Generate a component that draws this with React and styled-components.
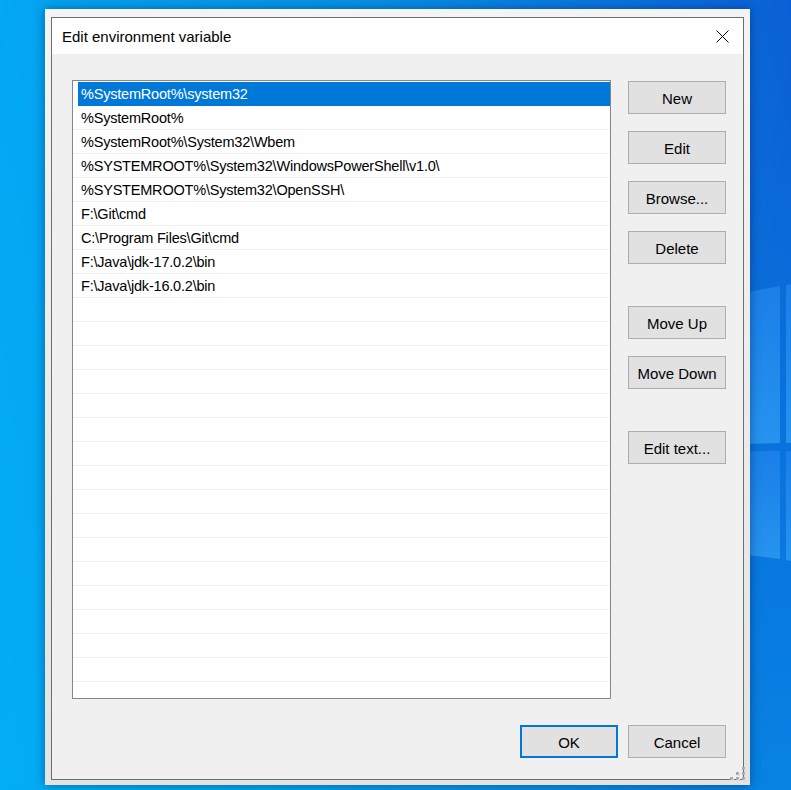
import React from "react";
import styled, { createGlobalStyle } from "styled-components";

const Global = createGlobalStyle`
  html, body { margin: 0; padding: 0; width: 791px; height: 790px; overflow: hidden; }
  body { font-family: "Liberation Sans", Arial, sans-serif; }
  * { box-sizing: border-box; }
`;

const Desktop = styled.div`
  position: relative;
  width: 791px;
  height: 790px;
  overflow: hidden;
  padding: 9px 0 0 45px;
  background: #0a8fe6;
`;

const WallpaperArt = styled.svg`
  position: absolute;
  left: 0;
  top: 0;
  z-index: 0;
`;

const Frame = styled.div`
  position: relative;
  z-index: 1;
  width: 705px;
  height: 776px;
  padding: 8px 6px 5px 6px;
  background: linear-gradient(#f4f4f4, #e3e3e3);
  box-shadow: 0 0 10px rgba(0, 20, 70, 0.45);
`;

const Dialog = styled.div`
  width: 693px;
  height: 763px;
  border: 1px solid #6e6e6e;
  background: #f0f0f0;
  display: flex;
  flex-direction: column;
`;

const TitleBar = styled.div`
  height: 36px;
  flex: none;
  background: #ffffff;
  display: flex;
  align-items: center;
  justify-content: space-between;
  padding: 0 14px 0 10px;
`;

const Title = styled.span`
  font-size: 15px;
  color: #000;
  padding-top: 1px;
`;

const CloseIcon = styled.svg`
  display: block;
`;

const Body = styled.div`
  flex: 1;
  display: flex;
  flex-direction: column;
  padding: 26px 17px 21px 20px;
`;

const MainRow = styled.div`
  display: flex;
  gap: 17px;
`;

const ListBox = styled.div`
  width: 539px;
  height: 619px;
  border: 1px solid #828790;
  background: #fff;
  padding-top: 1px;
  overflow: hidden;
`;

const Row = styled.div`
  height: 24px;
  display: flex;
  border-bottom: 1px solid ${(p) => (p.$selected ? "transparent" : "#f0f0f0")};
`;

const Cell = styled.div`
  flex: 1;
  margin-left: 5px;
  padding: 1px 0 0 3px;
  font-size: 14.5px;
  letter-spacing: -0.2px;
  line-height: 22px;
  white-space: nowrap;
  color: ${(p) => (p.$selected ? "#fff" : "#000")};
  background: ${(p) => (p.$selected ? "#0078d7" : "transparent")};
  box-shadow: ${(p) => (p.$selected ? "0 1px 0 #0078d7" : "none")};
`;

const SideButtons = styled.div`
  display: flex;
  flex-direction: column;
  padding-top: 1px;
`;

const Button = styled.button`
  width: 98px;
  height: 33px;
  padding: 1px 0 0;
  margin-top: ${(p) => p.$space || 0}px;
  font-family: "Liberation Sans", Arial, sans-serif;
  font-size: 15px;
  color: #000;
  background: #e1e1e1;
  border: ${(p) => (p.$primary ? "2px solid #0078d7" : "1px solid #adadad")};
  border-radius: 0;
  cursor: default;
`;

const Footer = styled.div`
  margin-top: 26px;
  display: flex;
  justify-content: flex-end;
  gap: 10px;
`;

const Grip = styled.svg`
  position: absolute;
  right: 3px;
  bottom: 3px;
`;

const entries = [
  "%SystemRoot%\\system32",
  "%SystemRoot%",
  "%SystemRoot%\\System32\\Wbem",
  "%SYSTEMROOT%\\System32\\WindowsPowerShell\\v1.0\\",
  "%SYSTEMROOT%\\System32\\OpenSSH\\",
  "F:\\Git\\cmd",
  "C:\\Program Files\\Git\\cmd",
  "F:\\Java\\jdk-17.0.2\\bin",
  "F:\\Java\\jdk-16.0.2\\bin",
];

const TOTAL_ROWS = 25;

const sideButtons = [
  { label: "New", space: 0 },
  { label: "Edit", space: 17 },
  { label: "Browse...", space: 17 },
  { label: "Delete", space: 17 },
  { label: "Move Up", space: 42 },
  { label: "Move Down", space: 17 },
  { label: "Edit text...", space: 42 },
];

function Wallpaper() {
  return (
    <WallpaperArt width="791" height="790" viewBox="0 0 791 790">
      <defs>
        <linearGradient id="wbg" x1="0" y1="0" x2="1" y2="0.12">
          <stop offset="0" stopColor="#03a7f3" />
          <stop offset="0.45" stopColor="#0892e7" />
          <stop offset="0.85" stopColor="#0a6ddb" />
          <stop offset="1" stopColor="#0b5fd4" />
        </linearGradient>
        <linearGradient id="wlow" x1="0" y1="0" x2="0" y2="1">
          <stop offset="0" stopColor="#00c4ff" stopOpacity="0" />
          <stop offset="1" stopColor="#00c4ff" stopOpacity="0.35" />
        </linearGradient>
        <linearGradient id="pane" x1="0" y1="0" x2="0" y2="1">
          <stop offset="0" stopColor="#1a7fe8" />
          <stop offset="1" stopColor="#2693ef" />
        </linearGradient>
      </defs>
      <rect width="791" height="790" fill="url(#wbg)" />
      <rect width="791" height="790" fill="url(#wlow)" />
      <polygon points="748,292 780,286 780,443 748,444" fill="url(#pane)" />
      <polygon points="786,285 791,284 791,443 786,443" fill="url(#pane)" />
      <polygon points="748,451 780,451 780,559 748,555" fill="url(#pane)" />
      <polygon points="786,451 791,451 791,561 786,560" fill="url(#pane)" />
      <line x1="749" y1="292" x2="749" y2="555" stroke="#5cb6ff" strokeWidth="1" opacity="0.5" />
    </WallpaperArt>
  );
}

export default function App() {
  const rows = Array.from({ length: TOTAL_ROWS }, (_, i) => entries[i] || "");
  return (
    <>
      <Global />
      <Desktop>
        <Wallpaper />
        <Frame>
          <Dialog>
            <TitleBar>
              <Title>Edit environment variable</Title>
              <CloseIcon width="13" height="13" viewBox="0 0 13 13">
                <path d="M0.5 0.5 L12.5 12.5 M12.5 0.5 L0.5 12.5" stroke="#000" strokeWidth="1" fill="none" />
              </CloseIcon>
            </TitleBar>
            <Body>
              <MainRow>
                <ListBox>
                  {rows.map((text, i) => (
                    <Row key={i} $selected={i === 0}>
                      <Cell $selected={i === 0}>{text}</Cell>
                    </Row>
                  ))}
                </ListBox>
                <SideButtons>
                  {sideButtons.map((b) => (
                    <Button key={b.label} $space={b.space}>
                      {b.label}
                    </Button>
                  ))}
                </SideButtons>
              </MainRow>
              <Footer>
                <Button $primary>OK</Button>
                <Button>Cancel</Button>
              </Footer>
            </Body>
          </Dialog>
          <Grip width="17" height="15" viewBox="0 0 17 15">
            <g fill="#a9a9a9">
              <rect x="12" y="0" width="3" height="3" />
              <rect x="6" y="5" width="3" height="3" />
              <rect x="12" y="5" width="3" height="3" />
              <rect x="0" y="10" width="3" height="3" />
              <rect x="6" y="10" width="3" height="3" />
              <rect x="12" y="10" width="3" height="3" />
            </g>
            <g fill="#d8d8d8">
              <rect x="14" y="2" width="2" height="2" />
              <rect x="8" y="7" width="2" height="2" />
              <rect x="14" y="7" width="2" height="2" />
              <rect x="2" y="12" width="2" height="2" />
              <rect x="8" y="12" width="2" height="2" />
              <rect x="14" y="12" width="2" height="2" />
            </g>
          </Grip>
        </Frame>
      </Desktop>
    </>
  );
}
